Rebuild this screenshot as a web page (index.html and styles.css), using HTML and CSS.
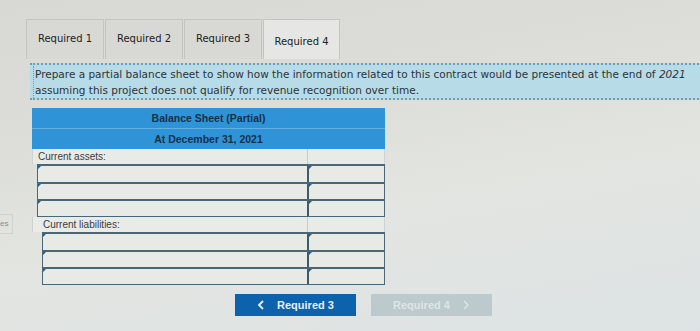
FILE: index.html
```html
<!DOCTYPE html>
<html lang="en">
<head>
    <meta charset="UTF-8">
    <title>Balance Sheet (Partial)</title>
    <link rel="stylesheet" href="styles.css">
</head>
<body>
    <div class="side">es</div>

    <div class="main">
        <!-- Tabs -->
        <div class="tabs">
            <div class="tab">Required 1</div>
            <div class="tab">Required 2</div>
            <div class="tab">Required 3</div>
            <div class="tab active">Required 4</div>
        </div>

        <!-- Instructions -->
        <div class="prompt">
            <p>Prepare a partial balance sheet to show how the information related to this contract would be presented at the end of <em>2021</em><br>assuming this project does not qualify for revenue recognition over time.</p>
        </div>

        <!-- Balance sheet -->
        <div class="sheet">
            <div class="head">Balance Sheet (Partial)</div>
            <div class="head sub">At December 31, 2021</div>

            <div class="row label"><span class="name">Current assets:</span><span class="amt"></span></div>
            <div class="inputs">
                <div class="line"><span class="name"><i class="tri"></i></span><span class="amt"><i class="tri"></i></span></div>
                <div class="line"><span class="name"><i class="tri"></i></span><span class="amt"><i class="tri"></i></span></div>
                <div class="line"><span class="name"><i class="tri"></i></span><span class="amt"><i class="tri"></i></span></div>
            </div>

            <div class="row label"><span class="name indent">Current liabilities:</span><span class="amt"></span></div>
            <div class="inputs indent">
                <div class="line"><span class="name"><i class="tri"></i></span><span class="amt"><i class="tri"></i></span></div>
                <div class="line"><span class="name"><i class="tri"></i></span><span class="amt"><i class="tri"></i></span></div>
                <div class="line"><span class="name"><i class="tri"></i></span><span class="amt"><i class="tri"></i></span></div>
            </div>
        </div>

        <!-- Navigation -->
        <div class="nav">
            <a class="btn prev">
                <svg width="8" height="10" viewBox="0 0 8 10"><path d="M6 1 L2 5 L6 9" fill="none" stroke="#e8f0f8" stroke-width="1.8"/></svg>
                Required 3
            </a>
            <a class="btn next">
                Required 4
                <svg width="8" height="10" viewBox="0 0 8 10"><path d="M2 1 L6 5 L2 9" fill="none" stroke="#dde5e8" stroke-width="1.4"/></svg>
            </a>
        </div>
    </div>
</body>
</html>
```

FILE: styles.css
```css
body {
    margin: 0;
    width: 700px;
    height: 331px;
    overflow: hidden;
    font-family: "DejaVu Sans", Verdana, sans-serif;
    background: linear-gradient(170deg, #d8d8d4 0%, #dcddd8 30%, #e3e5e1 60%, #dde3e4 100%);
    position: relative;
}
.side {
    position: absolute;
    left: 0;
    top: 214px;
    width: 12px;
    height: 18px;
    border: 1px solid #d0d2cf;
    border-left: none;
    font-size: 8px;
    color: #8a8c8c;
    line-height: 18px;
    font-family: "Liberation Sans", Arial, sans-serif;
}
.main {
    padding: 17px 0 0 26px;
}
.tabs {
    display: flex;
    align-items: flex-end;
    height: 42px;
}
.tab {
    width: 78px;
    height: 40px;
    box-sizing: border-box;
    border: 1px solid #c4c5c1;
    border-bottom: none;
    background: #d8d9d5;
    font-size: 10px;
    color: #222;
    display: flex;
    align-items: center;
    justify-content: center;
    margin-right: 1px;
    padding-bottom: 2px;
}
.tab.active {
    height: 40px;
    width: 77px;
    background: #e6e7e4;
    padding: 3px 0 0;
}
.prompt {
    margin: 4px 0 0 4px;
    width: 700px;
    height: 37px;
    box-sizing: border-box;
    background: #b7dbe7;
    border-top: 2px dotted #6f9db3;
    border-bottom: 2px dotted #6f9db3;
    padding: 1px 0 0 3px;
}
.prompt p {
    margin: 0;
    font-size: 10.5px;
    line-height: 16px;
    color: #2c3338;
    white-space: nowrap;
    border-left: 1px dotted #6f9db3;
    padding-left: 1px;
}
.sheet {
    margin: 8px 0 0 6px;
    width: 353px;
    font-family: "Liberation Sans", Arial, sans-serif;
}
.head {
    background: #2f93d8;
    height: 20px;
    line-height: 20px;
    text-align: center;
    font-size: 10.5px;
    font-weight: bold;
    color: #16314a;
    border-bottom: 1px solid #5fb0e4;
}
.head.sub {
    border-bottom: none;
}
.row {
    display: flex;
    height: 15px;
    background: #e9ebe6;
    border-left: 1px solid #cfd2cf;
    border-right: 1px solid #cfd2cf;
}
.row .name {
    flex: 1;
    font-size: 10px;
    color: #3a3c40;
    line-height: 15px;
    padding-left: 5px;
    border-right: 1px solid #c9ccc9;
}
.row .name.indent {
    padding-left: 10px;
}
.row .amt {
    width: 76px;
}
.inputs {
    margin-left: 5px;
    border: 1px solid #4d6675;
}
.inputs.indent {
    margin-left: 10px;
}
.line {
    display: flex;
    height: 15px;
    border-top: 2px solid #4d6675;
    background: #e7eae5;
}
.line:first-child {
    border-top: 1px solid #4d6675;
    height: 16px;
}
.line .name {
    flex: 1;
    position: relative;
    border-right: 2px solid #3f5a6b;
}
.line .amt {
    width: 75px;
    position: relative;
}
.tri {
    position: absolute;
    left: 0;
    top: 0;
    width: 0;
    height: 0;
    border-top: 3px solid #1f5f9a;
    border-right: 3px solid transparent;
}
.nav {
    display: flex;
    gap: 15px;
    margin: 9px 0 0 209px;
    font-family: "Liberation Sans", Arial, sans-serif;
}
.btn {
    width: 121px;
    height: 22px;
    display: flex;
    align-items: center;
    justify-content: center;
    gap: 12px;
    font-size: 11px;
    font-weight: bold;
}
.prev {
    background: #0c62ad;
    color: #e8f0f8;
}
.next {
    background: #bcc9cd;
    color: #dde5e8;
}
```
